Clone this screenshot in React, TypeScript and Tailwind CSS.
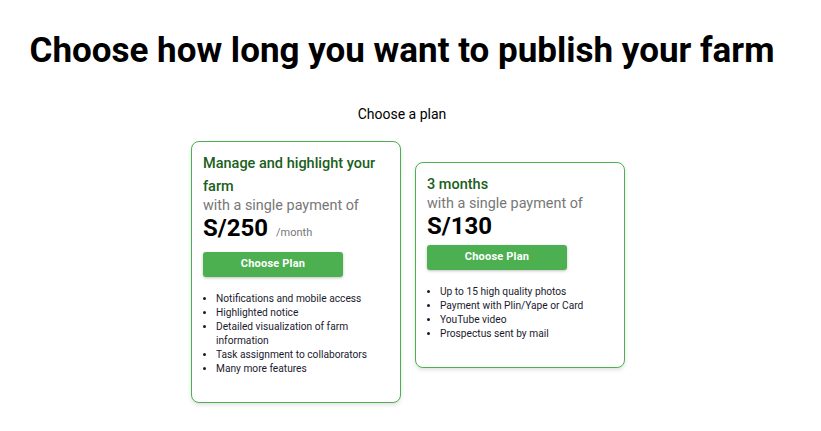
import { ReactNode } from "react";

type Plan = {
  title: string;
  price: string;
  unit?: string;
  features: string[];
  offset?: boolean;
};

const plans: Plan[] = [
  {
    title: "Manage and highlight your farm",
    price: "S/250",
    unit: "/month",
    features: [
      "Notifications and mobile access",
      "Highlighted notice",
      "Detailed visualization of farm information",
      "Task assignment to collaborators",
      "Many more features",
    ],
  },
  {
    title: "3 months",
    price: "S/130",
    features: [
      "Up to 15 high quality photos",
      "Payment with Plin/Yape or Card",
      "YouTube video",
      "Prospectus sent by mail",
    ],
    offset: true,
  },
];

const Card = ({ plan }: { plan: Plan }): ReactNode => {
  return (
    <div
      className={
        "w-[210px] rounded-lg border border-[#4caf50] bg-white px-[11px] pt-[10px] pb-[26px] shadow-[0_2px_4px_rgba(0,0,0,0.12)] " +
        (plan.offset ? "mt-[21px]" : "")
      }
    >
      <h3 className="text-[14.5px] font-medium leading-[23px] text-[#1b5e20]">{plan.title}</h3>
      <p className="text-[14.4px] leading-[15px] text-[#777]">with a single payment of</p>
      <div className="flex h-[31px] items-baseline gap-2 leading-[31px]">
        <span className="text-[24px] font-bold text-black">{plan.price}</span>
        {plan.unit && <span className="text-[11px] text-[#777]">{plan.unit}</span>}
      </div>
      <button
        className={
          "h-[25px] w-[140px] rounded-[3px] bg-[#4caf50] text-[11px] font-bold tracking-[0.2px] text-white shadow-[0_1px_3px_rgba(0,0,0,0.25)] " +
          (plan.unit ? "mt-[8px]" : "mt-[3px]")
        }
      >
        Choose Plan
      </button>
      <ul className="mt-[15px] list-disc pl-[13px] text-[10.2px] leading-[14px] text-[#1a1a2e]">
        {plan.features.map((f) => (
          <li key={f}>{f}</li>
        ))}
      </ul>
    </div>
  );
};

export default function App() {
  return (
    <div className="min-h-[431px] w-[804px] bg-white font-['Roboto',sans-serif] text-black">
      <h1 className="pt-[30px] text-center text-[35px] font-bold leading-[41px]">
        Choose how long you want to publish your farm
      </h1>
      <p className="mt-[34px] text-center text-[14px] leading-[18px]">Choose a plan</p>
      <div className="mt-[18px] flex items-start justify-center gap-[14px] pl-[12px]">
        {plans.map((p) => (
          <Card key={p.price} plan={p} />
        ))}
      </div>
    </div>
  );
}
